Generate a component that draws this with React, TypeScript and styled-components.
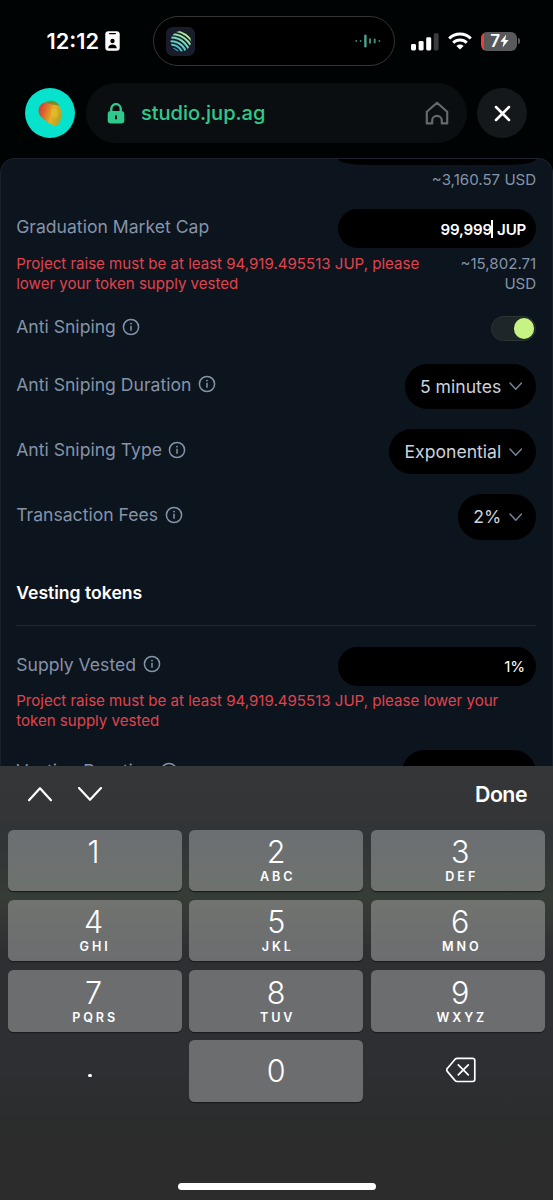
import React from "react";
import styled, { createGlobalStyle } from "styled-components";

const GlobalStyle = createGlobalStyle`
  * { box-sizing: border-box; }
  body { margin: 0; background: #000304; font-family: Inter, "Liberation Sans", sans-serif; }
  svg { display: block; flex: none; }
`;

const Screen = styled.main`
  width: 553px;
  height: 1200px;
  overflow: hidden;
  display: flex;
  flex-direction: column;
  background: #000304;
  color: #fff;
`;

const StatusBar = styled.header`
  height: 83px;
  flex: none;
  display: flex;
  align-items: flex-start;
  padding: 16px 33px 0 46.5px;
`;

const Clock = styled.div`
  width: 106.5px;
  height: 50px;
  display: flex;
  align-items: center;
  gap: 6px;
  font-size: 21.8px;
  font-weight: 600;
`;

const Island = styled.div`
  width: 242px;
  height: 50px;
  border: 1.5px solid #343434;
  border-radius: 25px;
  background: #000;
  display: flex;
  align-items: center;
  justify-content: space-between;
  padding: 0 13px 0 11.5px;
`;

const StatusIcons = styled.div`
  height: 50px;
  flex: 1;
  display: flex;
  align-items: center;
  justify-content: flex-end;
  gap: 9px;
`;

const Battery = styled.div`
  width: 39px;
  display: flex;
  align-items: center;
  gap: 1.5px;
`;

const BatteryBody = styled.div`
  width: 36px;
  height: 19px;
  border-radius: 6px;
  background: linear-gradient(90deg, #f03c38 0 3px, #58595b 3px);
  display: flex;
  align-items: center;
  justify-content: center;
  padding-left: 2px;
  font-size: 17px;
  font-weight: 600;
`;

const BatteryCap = styled.div`
  width: 2px;
  height: 6px;
  border-radius: 0 2px 2px 0;
  background: #58595b;
`;

const BrowserBar = styled.nav`
  height: 75px;
  flex: none;
  display: flex;
  align-items: flex-start;
  padding-left: 25px;
`;

const Round = styled.div<{ $bg: string }>`
  width: 50px;
  height: 50px;
  margin-top: 5px;
  border-radius: 50%;
  background: ${(p) => p.$bg};
  display: flex;
  align-items: center;
  justify-content: center;
`;

const AddressPill = styled.div`
  width: 381px;
  height: 60px;
  margin: 0 10px 0 11px;
  border-radius: 30px;
  background: #0b0e10;
  display: flex;
  align-items: center;
  padding: 0 18px 0 21px;
`;

const Url = styled.span`
  flex: 1;
  margin-left: 16px;
  color: #2fc98d;
  font-size: 20.1px;
  font-weight: 500;
  letter-spacing: -0.05px;
`;

const Panel = styled.section`
  height: 608px;
  flex: none;
  overflow: hidden;
  border: 1.5px solid #19222b;
  border-bottom: 0;
  border-radius: 15px 15px 0 0;
  background: #0c141d;
  padding: 0 15.8px 0 15.2px;
  color: #8593a9;
`;

const Row = styled.div<{ $height: number; $mb?: number }>`
  height: ${(p) => p.$height}px;
  margin-bottom: ${(p) => p.$mb ?? 0}px;
  display: flex;
  align-items: center;
  justify-content: space-between;
`;

const Label = styled.div`
  display: flex;
  align-items: center;
  gap: 6.5px;
  padding-bottom: 4px;
  font-size: 17.6px;
  line-height: 25px;
  white-space: nowrap;
`;

const Field = styled.div`
  width: 198px;
  height: 39px;
  border-radius: 20px;
  background: #000;
  color: #fff;
  display: flex;
  align-items: center;
  justify-content: flex-end;
  padding: 1px 11px 0 0;
  font-size: 15.1px;
`;

const AmountField = styled(Field)`
  padding-right: 10px;
  font-weight: 600;
  letter-spacing: -0.15px;
`;

const Caret = styled.span`
  width: 2px;
  height: 18px;
  margin: 0 4px 0 -1px;
  background: #fff;
`;

const ClippedField = styled(Field)`
  height: 5.5px;
  margin-left: auto;
  border-radius: 0 0 30px 30px / 0 0 6px 6px;
`;

const Note = styled.div<{ $height: number; $mb: number; $top?: number }>`
  height: ${(p) => p.$height}px;
  margin-bottom: ${(p) => p.$mb}px;
  padding-top: ${(p) => p.$top ?? 0}px;
  display: flex;
  justify-content: space-between;
  font-size: 15.1px;
  line-height: 20.1px;
`;

const ErrorText = styled.p<{ $width: number }>`
  width: ${(p) => p.$width}px;
  margin: 0;
  color: #e0434e;
  letter-spacing: -0.02px;
`;

const Fiat = styled.p<{ $width: number }>`
  width: ${(p) => p.$width}px;
  margin: 0 0 0 auto;
  text-align: right;
`;

const Select = styled.div`
  height: 45.5px;
  border-radius: 23px;
  background: #000;
  color: #ccd2dc;
  display: flex;
  align-items: center;
  gap: 7.5px;
  padding: 0 14px 0 15px;
  font-size: 17.6px;
`;

const Toggle = styled.div`
  width: 45px;
  height: 25.5px;
  border: 1.2px solid #2b3532;
  border-radius: 13px;
  background: #1d2628;
  display: flex;
  align-items: center;
  justify-content: flex-end;
  padding-right: 1.2px;
`;

const Knob = styled.div`
  width: 20.5px;
  height: 20.5px;
  border-radius: 50%;
  background: #c7f284;
`;

const Heading = styled.h2`
  height: 46px;
  margin: 0 0 20.5px;
  border-bottom: 1.2px solid #1f2832;
  color: #fff;
  font-size: 17.6px;
  font-weight: 600;
  line-height: 25px;
`;

const Keyboard = styled.section`
  flex: 1;
  display: flex;
  flex-direction: column;
  background: linear-gradient(180deg, #353638 0, #343537 54px, #303338 60px, #363c36 130px, #343734 155px, #2e2f32 185px, #2e2f33 300px, #2b2c2c 360px, #2b2c2b 434px);
`;

const Toolbar = styled.div`
  height: 56px;
  flex: none;
  display: flex;
  align-items: center;
  gap: 26px;
  padding: 1px 26px 0 28px;
`;

const Done = styled.span`
  margin-left: auto;
  padding-bottom: 1.5px;
  font-size: 21.3px;
  font-weight: 600;
  letter-spacing: -0.5px;
`;

const Keys = styled.div`
  display: grid;
  grid-template-columns: repeat(3, 174px);
  grid-auto-rows: 61.5px;
  gap: 8.8px 7.6px;
  padding: 7.5px 0 0 7.6px;

  > :nth-child(3n + 1) { padding-right: 2px; }
  > :nth-child(3n) { padding-left: 5px; }
`;

const Key = styled.div<{ $blank?: boolean; $shade?: string }>`
  display: flex;
  flex-direction: column;
  align-items: center;
  padding-top: 4.5px;
  border-radius: 5.5px;
  background: ${(p) => (p.$blank ? "none" : p.$shade ?? "#6c6d6f")};
  box-shadow: ${(p) => (p.$blank ? "none" : "0 1.3px 0 #1c1d1e")};
`;

const ZeroKey = styled(Key)`
  padding: 0 0 2px;
  justify-content: center;
`;

const BackspaceKey = styled(ZeroKey)`
  && { padding-left: 7px; }
`;

const Digit = styled.span`
  font-size: 30.5px;
  line-height: 35px;
  font-weight: 350;
`;

const Letters = styled.span`
  padding-left: 3px;
  font-size: 12.6px;
  line-height: 15px;
  font-weight: 600;
  letter-spacing: 2.9px;
`;

const Dot = styled.span`
  width: 3.6px;
  height: 3.6px;
  margin: 29px 7px 0 0;
  border-radius: 50%;
  background: #fff;
`;

const HomeIndicator = styled.div`
  width: 198px;
  height: 7px;
  margin: auto auto 10px;
  border-radius: 4px;
  background: #fff;
`;

const BadgeIcon = () => (
  <svg width="15" height="20" viewBox="0 0 15 20">
    <rect x="0.3" y="0.3" width="14.4" height="19.4" rx="3" fill="#fff" />
    <path d="M4.6 2.6h5.8" stroke="#000" strokeWidth="1.3" strokeLinecap="round" />
    <circle cx="7.5" cy="10" r="2.2" />
    <path d="M3.2 17.2c0-2.4 1.8-3.8 4.3-3.8s4.3 1.4 4.3 3.8z" />
  </svg>
);

const JupiterLogo = () => (
  <svg width="29" height="29" viewBox="0 0 29 29">
    <defs>
      <linearGradient id="jup" x1="8" y1="24" x2="21" y2="5" gradientUnits="userSpaceOnUse">
        <stop offset="0" stopColor="#2fb5d8" />
        <stop offset="0.5" stopColor="#74d9bd" />
        <stop offset="1" stopColor="#c9ef87" />
      </linearGradient>
      <clipPath id="planet">
        <circle cx="14.8" cy="14.2" r="10.3" />
      </clipPath>
    </defs>
    <rect width="29" height="29" rx="6.5" fill="#191c2a" />
    <g fill="none" stroke="url(#jup)" strokeWidth="2" clipPath="url(#planet)">
      {[8.6, 12.2, 15.8, 19.4, 23, 26.4].map((r) => (
        <circle key={r} cx="5" cy="30" r={r} />
      ))}
    </g>
  </svg>
);

const Waveform = () => (
  <svg width="26" height="14" viewBox="0 0 26 14" fill="none" stroke="#3a8c7d" strokeWidth="2" strokeLinecap="round">
    <path d="M1.2 7v.01M5.6 7v.01M24.4 7v.01" strokeWidth="1.8" />
    <path d="M10.4 1.8v10.4" stroke="#4aa491" strokeWidth="2.4" />
    <path d="M15 5.2v3.6M19.7 5.5v3" />
  </svg>
);

const SignalIcon = () => (
  <svg width="28" height="19" viewBox="0 0 28 19" fill="#fff">
    <rect x="0" y="12" width="5" height="6.5" rx="1.4" />
    <rect x="7.6" y="9" width="5" height="9.5" rx="1.4" />
    <rect x="15.2" y="5.3" width="5" height="13.2" rx="1.4" />
    <rect x="22.8" y="1.3" width="4.8" height="17.2" rx="1.4" fill="#3a3c3d" />
  </svg>
);

const WifiIcon = () => (
  <svg width="24" height="18" viewBox="0 0 24 18" fill="none" stroke="#fff" strokeWidth="3">
    <path d="M1.2 6.5a15.3 15.3 0 0 1 21.6 0" />
    <path d="M5.2 10.8a9.7 9.7 0 0 1 13.6 0" />
    <path d="M12 17.6l-3.6-3.7a5.2 5.2 0 0 1 7.2 0z" fill="#fff" stroke="none" />
  </svg>
);

const BoltIcon = () => (
  <svg width="9" height="14" viewBox="0 0 9 14">
    <path d="M6.2.5L.4 7.8h3.3L2.6 13.5 8.6 6H5.2z" fill="#fff" />
  </svg>
);

const MangoIcon = () => (
  <svg width="26" height="28" viewBox="0 0 26 28">
    <defs>
      <linearGradient id="mango" x1="3" y1="12" x2="23" y2="18" gradientUnits="userSpaceOnUse">
        <stop offset="0" stopColor="#dc4430" />
        <stop offset="0.3" stopColor="#de762b" />
        <stop offset="0.6" stopColor="#e3b025" />
        <stop offset="1" stopColor="#b9a522" />
      </linearGradient>
    </defs>
    <path d="M2 9C3.300 4.800 7.500 2.600 12.500 2.800 18.500 3 24 7 24.500 13.500 24.700 18 23 24.500 20.500 26 17.500 27.500 13.500 25.300 9.500 22.500 6 20 2.700 17.500 1.800 13.500 1.400 12 1.600 10.300 2 9Z" fill="url(#mango)" />
    <path d="M8.500 3.500C11.500 1.200 16 1 19.300 3.200 20.800 4.200 21.900 5.500 22.400 6.800 17.500 5.800 12.500 5.300 8.500 3.500Z" fill="#80862c" />
    <ellipse cx="17.500" cy="14" rx="3.500" ry="5" transform="rotate(-20 17.500 14)" fill="#ecc535" opacity="0.45" />
  </svg>
);

const LockIcon = () => (
  <svg width="18" height="21" viewBox="0 0 18 21">
    <path d="M4.300 9V5.800a4.700 4.700 0 0 1 9.400 0V9" fill="none" stroke="#2fc98d" strokeWidth="2.300" />
    <rect x="0.700" y="8" width="16.600" height="12.600" rx="3" fill="#2fc98d" />
    <path d="M9 12.600v3.600" stroke="#0b0e10" strokeWidth="2" />
  </svg>
);

const HomeIcon = () => (
  <svg width="24" height="24" viewBox="0 0 24 24" fill="none" stroke="#66686a" strokeWidth="2.200" strokeLinejoin="round">
    <path d="M12 1.700l10.200 9v11.700h-5.400V19.400a4.800 4.500 0 0 0-9.600 0v3H1.800V10.700z" />
  </svg>
);

const CloseIcon = () => (
  <svg width="17" height="17" viewBox="0 0 17 17" stroke="#fff" strokeWidth="2.500" strokeLinecap="round">
    <path d="M2 2l13 13M15 2L2 15" />
  </svg>
);

const InfoIcon = () => (
  <svg width="18" height="18" viewBox="0 0 18 18" fill="none" stroke="#8593a9">
    <circle cx="9" cy="9" r="7.600" strokeWidth="1.500" />
    <path d="M9 7.800v5" strokeWidth="1.500" />
    <circle cx="9" cy="5.600" r="0.950" fill="#8593a9" stroke="none" />
  </svg>
);

const Chevron = ({ up, size, color, weight }: { up?: boolean; size: number; color: string; weight: number }) => (
  <svg width={size} height={size * 0.6} viewBox={`0 0 ${size} ${size * 0.6}`} fill="none" stroke={color} strokeWidth={weight} strokeLinecap="round" strokeLinejoin="round">
    <path
      d={
        up
          ? `M1 ${size * 0.55}L${size / 2} 1.200L${size - 1} ${size * 0.55}`
          : `M1 1L${size / 2} ${size * 0.53}L${size - 1} 1`
      }
    />
  </svg>
);

const BackspaceIcon = () => (
  <svg width="30" height="26" viewBox="0 0 30 26" fill="none" stroke="#fff" strokeWidth="1.700" strokeLinecap="round" strokeLinejoin="round">
    <path d="M11.200 1.300H26.600a2.200 2.200 0 0 1 2.200 2.200v18.800a2.200 2.200 0 0 1-2.200 2.200H11.200a3 3 0 0 1-2.100-.9L1.500 14.600a2.400 2.400 0 0 1 0-3.400L9.100 2.200a3 3 0 0 1 2.100-.9z" />
    <path d="M12.300 7.800l10 10M22.300 7.800l-10 10" />
  </svg>
);

const selects = [
  { label: "Anti Sniping Duration", value: "5 minutes" },
  { label: "Anti Sniping Type", value: "Exponential" },
  { label: "Transaction Fees", value: "2%" },
];

const keys = [
  ["1", ""],
  ["2", "ABC"],
  ["3", "DEF"],
  ["4", "GHI"],
  ["5", "JKL"],
  ["6", "MNO"],
  ["7", "PQRS"],
  ["8", "TUV"],
  ["9", "WXYZ"],
];

const rowShades = [
  "linear-gradient(180deg, #6c6f72, #6e726e)",
  "linear-gradient(180deg, #70736f, #6c6d6f)",
  "#6c6d6f",
];

const SelectRow = ({ label, value, gap }: { label: string; value: string; gap: number }) => (
  <Row $height={45.5} $mb={gap}>
    <Label>
      {label}
      <InfoIcon />
    </Label>
    <Select>
      {value}
      <Chevron size={13.5} color="#75839a" weight={1.5} />
    </Select>
  </Row>
);

export default function App() {
  return (
    <Screen>
      <GlobalStyle />
      <StatusBar>
        <Clock>
          12:12
          <BadgeIcon />
        </Clock>
        <Island>
          <JupiterLogo />
          <Waveform />
        </Island>
        <StatusIcons>
          <SignalIcon />
          <WifiIcon />
          <Battery>
            <BatteryBody>
              7<BoltIcon />
            </BatteryBody>
            <BatteryCap />
          </Battery>
        </StatusIcons>
      </StatusBar>

      <BrowserBar>
        <Round $bg="#06e2cc">
          <MangoIcon />
        </Round>
        <AddressPill>
          <LockIcon />
          <Url>studio.jup.ag</Url>
          <HomeIcon />
        </AddressPill>
        <Round $bg="#14181a">
          <CloseIcon />
        </Round>
      </BrowserBar>

      <Panel>
        <ClippedField />
        <Note $height={25.1} $mb={19.8} $top={5}>
          <Fiat $width={198}>~3,160.57 USD</Fiat>
        </Note>
        <Row $height={39} $mb={5.2}>
          <Label>Graduation Market Cap</Label>
          <AmountField>
            99,999
            <Caret />
            JUP
          </AmountField>
        </Row>
        <Note $height={40.2} $mb={22}>
          <ErrorText $width={415}>
            Project raise must be at least 94,919.495513 JUP, please lower your token supply vested
          </ErrorText>
          <Fiat $width={80}>~15,802.71 USD</Fiat>
        </Note>
        <Row $height={25.5} $mb={22.3}>
          <Label>
            Anti Sniping
            <InfoIcon />
          </Label>
          <Toggle>
            <Knob />
          </Toggle>
        </Row>
        {selects.map((s, i) => (
          <SelectRow key={s.label} label={s.label} value={s.value} gap={i === 2 ? 40.5 : 19.8} />
        ))}
        <Heading>Vesting tokens</Heading>
        <Row $height={39} $mb={5}>
          <Label>
            Supply Vested
            <InfoIcon />
          </Label>
          <Field>1%</Field>
        </Row>
        <Note $height={40.2} $mb={19}>
          <ErrorText $width={500}>
            Project raise must be at least 94,919.495513 JUP, please lower your token supply vested
          </ErrorText>
        </Note>
        <SelectRow label="Vesting Duration" value="12 months" gap={0} />
      </Panel>

      <Keyboard>
        <Toolbar>
          <Chevron up size={24} color="#fff" weight={2.2} />
          <Chevron size={24} color="#fff" weight={2.2} />
          <Done>Done</Done>
        </Toolbar>
        <Keys>
          {keys.map(([digit, letters], i) => (
            <Key key={digit} $shade={rowShades[Math.floor(i / 3)]}>
              <Digit>{digit}</Digit>
              <Letters>{letters}</Letters>
            </Key>
          ))}
          <Key $blank>
            <Dot />
          </Key>
          <ZeroKey>
            <Digit>0</Digit>
          </ZeroKey>
          <BackspaceKey $blank>
            <BackspaceIcon />
          </BackspaceKey>
        </Keys>
        <HomeIndicator />
      </Keyboard>
    </Screen>
  );
}
